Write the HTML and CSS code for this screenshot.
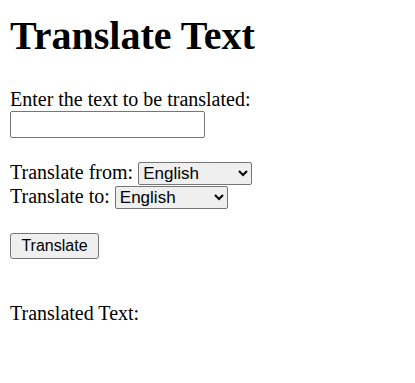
FILE: index.html
```html
<!DOCTYPE html>
<html lang="en">
<head>
    <meta charset="UTF-8">
    <meta name="viewport" content="width=device-width, initial-scale=1.0">
    <title>Translate Text</title>
    <link rel="stylesheet" href="styles.css">
</head>
<body>
    <h1>Translate Text</h1>
    <form id="translateForm">
        <label for="text">Enter the text to be translated:</label><br>
        <input type="text" id="text" name="text"><br><br>
        <label for="from">Translate from:</label>
        <select id="from" name="from">
            <option value="en">English</option>
            <option value="es">Spanish</option>
            <option value="fr">French</option>
        </select><br>
        <label for="to">Translate to:</label>
        <select id="to" name="to">
            <option value="en">English</option>
            <option value="es">Spanish</option>
            <option value="fr">French</option>
        </select><br><br>
        <button type="button">Translate</button>
    </form>
    <p class="result-label">Translated Text:</p>
    <p id="result"></p>
</body>
</html>
```
FILE: styles.css
```css
body {
    margin: 10px;
    font-family: "Liberation Serif", "Times New Roman", serif;
    font-size: 20px;
    color: black;
    background-color: white;
}

h1 {
    font-size: 40px;
    margin: 2px 0 29px;
}

input[type="text"] {
    width: 195px;
    height: 27px;
    padding: 1px 2px;
    border: 1px solid #767676;
    border-radius: 2px;
    font-family: "Liberation Sans", Arial, sans-serif;
    font-size: 16px;
    box-sizing: border-box;
    vertical-align: top;
}

select {
    font-family: "Liberation Sans", Arial, sans-serif;
    font-size: 17px;
    height: 23px;
    width: 114px;
    border: 1px solid #767676;
    border-radius: 2px;
}

#to {
    width: 113px;
}

button {
    font-family: "Liberation Sans", Arial, sans-serif;
    font-size: 16px;
    height: 26px;
    width: 89px;
    margin-top: 1px;
    padding: 1px 6px;
    border: 1px solid #767676;
    border-radius: 3px;
    background-color: #efefef;
    vertical-align: top;
}

.result-label {
    margin: 43px 0 0;
}
```
